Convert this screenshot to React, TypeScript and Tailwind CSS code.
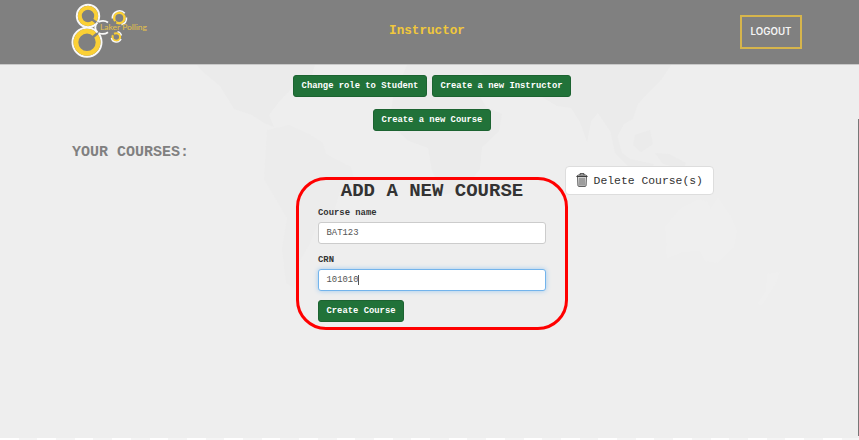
import React from "react";

const mono = "font-['Liberation_Mono','Courier_New',monospace]";
const greenButton =
  "h-[22px] rounded-[3px] border border-[#1c6331] bg-[#217239] text-center text-[8.85px] leading-[20px] font-bold whitespace-nowrap text-white";
const field =
  "block h-[22px] w-[228px] rounded-[3px] border bg-white px-[7.5px] text-[8.9px] leading-[20px] text-[#555]";

function Logo() {
  return (
    <svg width="82" height="56" viewBox="68 2 82 56" className="block">
      <g fill="none" stroke="#f8f8f8" strokeWidth="2">
        <circle cx="88" cy="16" r="11.200" />
        <circle cx="87" cy="42.300" r="14.500" />
      </g>
      <g fill="none" stroke="#fbd035">
        <circle cx="88" cy="16" r="8.200" strokeWidth="4" />
        <circle cx="87" cy="42.300" r="11.100" strokeWidth="4.800" />
      </g>
      <path d="M90 18l9 6.500M92 38l8-7" stroke="#808080" strokeWidth="2.400" />
      <path d="M97.500 22.500C94.500 25 94.500 30 97.500 32.500" fill="none" stroke="#f8f8f8" strokeWidth="1.900" />
      <path d="M98.500 21.800c3-1.200 7-1.200 9.500.7M98.500 33c3 1.200 7 1 9.500-.8" fill="none" stroke="#f8f8f8" strokeWidth="1.800" />
      <circle cx="119.300" cy="18" r="5.200" fill="none" stroke="#fbd035" strokeWidth="2.500" />
      <path d="M112.300 18.500a7.200 7.200 0 0 1 12.500-5.200M126.500 17.500a7.200 7.200 0 0 1-5 7.300" fill="none" stroke="#f8f8f8" strokeWidth="1.500" />
      <path d="M116 21.500l-3 3" stroke="#808080" strokeWidth="2" />
      <circle cx="116.300" cy="37" r="3.800" fill="none" stroke="#fbd035" strokeWidth="2.100" />
      <path d="M111.300 38a5.200 5.200 0 0 0 9.800 1M117.500 31.700a5.200 5.200 0 0 1 4 3.800" fill="none" stroke="#f8f8f8" strokeWidth="1.300" />
      <path d="M112 33l2 2" stroke="#808080" strokeWidth="2" />
      <text x="100" y="30.300" fill="#e4c04b" fontFamily="Lato, sans-serif" fontSize="7.2" textLength="47" lengthAdjust="spacingAndGlyphs">Laker Polling</text>
    </svg>
  );
}

function WorldMap() {
  return (
    <svg width="859" height="373" viewBox="0 65 859 373" className="absolute inset-0" fill="#ebebeb">
      <path d="M197 65h118l-4 13-18 9-14 15-10 13 5 12-10-4-12-8-18-6-14-23-18-15z" />
      <path d="M267 130l22-5 20 9 14 9 3 11 25 13 3 12-14 12-6 21-17 13-8 20-10 17-5 26-8-5-4-35 5-30-13-22-10-17z" fill="#ececec" />
      <path d="M394 91l17-9 25-1 25 6 15 3 10 17 16 7-3 17-17 16-2 22-16 20-20 6-12-24-4-23-19-7-17-15-1-14z" />
      <path d="M402 77l5-12h264l-10 15-14 14-9 10-5 15-9 5-8 15-8-11-10-15-7 8-4 21-7-20-9-14-14-2-15-9-15-12-10-7-14-1-12 4-10-8-21 1-9 7z" />
      <path d="M609 125l8 10 5 18 8 6 24 5-2 4-24-2-13-13zM635 135l15-5 3 14-12 8-8-7zM655 153l14 1 17 9-3 6-20-5z" />
      <path d="M665 226l17-19 17-8 9 3 2 7 8-12 12 18 7 15-3 17-16 16-13-2-5-10-18 1-15 7zM767 274l13-2-5 13-13 20-5-1 8-12z" fill="#efefef" />
    </svg>
  );
}

function TrashIcon() {
  return (
    <svg width="12" height="14" viewBox="0 0 12 14" fill="none" stroke="#3d3d3d" strokeWidth="1" className="mr-[5.500px] mb-[3px]">
      <path d="M4 2V.7h4V2M.7 3.500C1.300 2.300 2 2.100 3 2.100h6c1 0 1.700.2 2.300 1.400zM1.700 3.700l.3 8.800c0 .6.300.8.800.8h6.400c.5 0 .8-.2.800-.8l.3-8.800M4 4.500v8M6 4.500v8M8 4.500v8" />
    </svg>
  );
}

export default function App() {
  return (
    <div className={`${mono} relative flex h-[440px] w-[859px] flex-col overflow-hidden bg-[#eee]`}>
      <header className="grid h-[65px] shrink-0 grid-cols-3 border-b border-[#c9c9c9] bg-[#808080]">
        <div className="pt-[2px] pl-[68px]"><Logo /></div>
        <h1 className="pr-[5px] pt-[21px] text-center text-[12.65px] leading-[20px] font-bold text-[#f1c83c]">Instructor</h1>
        <div className="flex justify-end pt-[15px] pr-[57px]">
          <button className="h-[34px] w-[62px] border-2 border-solid border-[#d6b54c] text-center font-['Inter','Liberation_Sans',sans-serif] text-[9.7px] font-semibold text-[#f5f5f5]">LOGOUT</button>
        </div>
      </header>
      <main className="relative h-[373px] shrink-0">
        <WorldMap />
        <div className="relative flex h-full flex-col">
          <div className="flex justify-center gap-[5px] pt-[10px] pl-[5px]">
            <button className={`${greenButton} w-[134px]`}>Change role to Student</button>
            <button className={`${greenButton} w-[139px]`}>Create a new Instructor</button>
          </div>
          <div className="flex justify-center pt-[12px] pl-[5px]">
            <button className={`${greenButton} w-[118px]`}>Create a new Course</button>
          </div>
          <h2 className="mt-[12px] pl-[72px] text-[15px] leading-[20px] font-bold text-[#808080]">YOUR COURSES:</h2>
          <div className="mt-[3px] flex pl-[296px]">
            <section className="mt-[11px] h-[153px] w-[272px] shrink-0 rounded-[30px] border-3 border-[#f00] pl-[19px]">
              <h3 className="w-[228px] text-center text-[19px] leading-[22px] font-bold whitespace-nowrap text-[#333]">ADD A NEW COURSE</h3>
              <label className="mt-[5px] block text-[8.9px] leading-[12px] font-bold text-[#333]">Course name</label>
              <div className={`${field} mt-[3px] border-[#ccc]`}>BAT123</div>
              <label className="mt-[10px] block text-[8.9px] leading-[12px] font-bold text-[#333]">CRN</label>
              <div className={`${field} mt-[3px] flex items-center border-[#73b4ec] shadow-[0_0_5px_#9ecaf0]`}>
                <span>101010</span><span className="h-[10px] w-px bg-[#555]" />
              </div>
              <button className={`${greenButton} mt-[9px] w-[86px]`}>Create Course</button>
            </section>
            <button className="-ml-[3px] flex h-[29px] w-[149px] items-center justify-center rounded-[4px] border border-[#ddd] bg-white pt-[1px] text-[11.4px] whitespace-nowrap text-[#333]">
              <TrashIcon /><span className="pt-px">Delete Course(s)</span>
            </button>
          </div>
        </div>
        <div className="absolute top-[54px] right-0 h-[317px] w-px bg-[#777]" />
      </main>
      <div className="h-[2px] shrink-0 bg-[repeating-linear-gradient(90deg,#fff_0_18.7px,#f5f5f5_18.7px_37.4px)]" />
    </div>
  );
}
